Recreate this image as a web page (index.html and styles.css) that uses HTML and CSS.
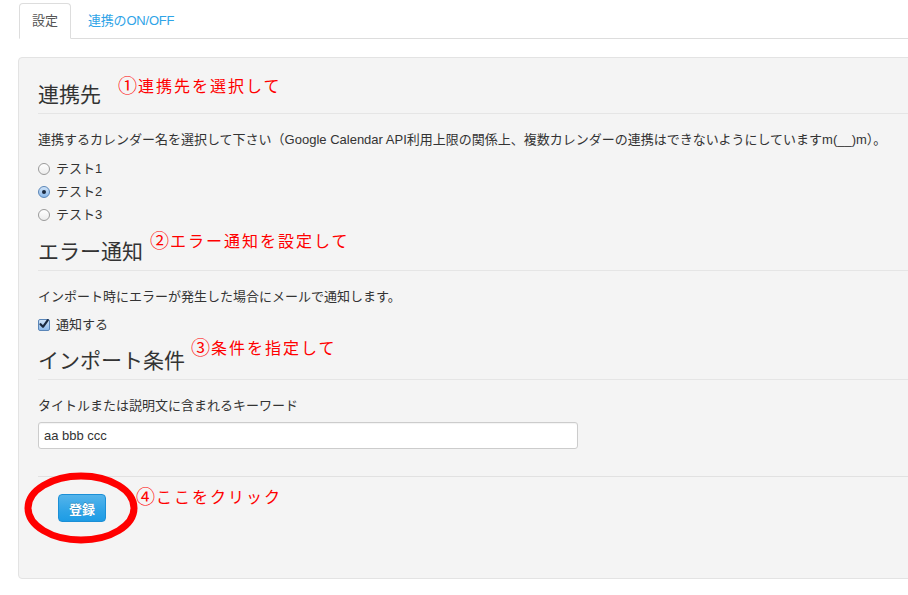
FILE: index.html
```html
<!DOCTYPE html>
<html lang="ja">
<head>
<meta charset="utf-8">
<link rel="stylesheet" href="styles.css">
</head>
<body>
<div class="page">
  <ul class="tabs">
    <li class="tab active">設定</li>
    <li class="tab link">連携のON/OFF</li>
  </ul>
  <div class="well">
    <div class="legend">連携先</div>
    <p class="help">連携するカレンダー名を選択して下さい（Google Calendar API利用上限の関係上、複数カレンダーの連携はできないようにしていますm(__)m）。</p>
    <div class="radios">
      <label class="opt"><span class="radio"></span>テスト1</label>
      <label class="opt"><span class="radio checked"></span>テスト2</label>
      <label class="opt"><span class="radio"></span>テスト3</label>
    </div>
    <div class="legend l2">エラー通知</div>
    <p class="help">インポート時にエラーが発生した場合にメールで通知します。</p>
    <label class="opt check-row"><span class="checkbox"><svg viewBox="0 0 12 12" width="12" height="12"><path d="M2.5 6.2 L5 8.8 L9.8 2.2" fill="none" stroke="#1a2a40" stroke-width="2.2" stroke-linecap="round" stroke-linejoin="round"/></svg></span>通知する</label>
    <div class="legend l3">インポート条件</div>
    <p class="help label">タイトルまたは説明文に含まれるキーワード</p>
    <div class="input">aa bbb ccc</div>
    <div class="actions">
      <button class="btn">登録</button>
    </div>
  </div>

  <div class="note n1"><span class="num">①</span>連携先を選択して</div>
  <div class="note n2"><span class="num">②</span>エラー通知を設定して</div>
  <div class="note n3"><span class="num">③</span>条件を指定して</div>
  <div class="note n4"><span class="num">④</span>ここをクリック</div>
  <svg class="ring" width="120" height="76" viewBox="0 0 120 76"><ellipse cx="59" cy="38" rx="53" ry="32" fill="none" stroke="#f00" stroke-width="7"/></svg>
</div>
</body>
</html>
```
FILE: styles.css
```css
html, body {
  margin: 0;
  padding: 0;
  background: #fff;
  overflow: hidden;
}
body {
  font-family: "Liberation Sans", "Noto Sans CJK JP", sans-serif;
  font-size: 13px;
  color: #333;
}
.page {
  position: relative;
  width: 908px;
  height: 595px;
  overflow: hidden;
}
.tabs {
  list-style: none;
  margin: 3px 0 0 19px;
  padding: 0;
  display: flex;
  border-bottom: 1px solid #ddd;
  height: 35px;
}
.tab {
  height: 35px;
  line-height: 33px;
  box-sizing: border-box;
  padding: 0 12px;
  margin-right: 2px;
  border: 1px solid transparent;
  border-radius: 4px 4px 0 0;
}
.tab.active {
  border-color: #ddd;
  border-bottom-color: #fff;
  background: #fff;
  height: 36px;
  color: #555;
}
.tab.link {
  color: #2fa4e7;
  padding-left: 14px;
  letter-spacing: -0.2px;
}
.well {
  margin: 18px -20px 0 18px;
  background: #f4f4f4;
  border: 1px solid #e3e3e3;
  border-radius: 4px;
  padding: 18px 0 55px 19px;
  box-sizing: border-box;
  height: 522px;
}
.legend {
  font-size: 21px;
  line-height: 37px;
  height: 37px;
  border-bottom: 1px solid #e5e5e5;
  color: #333;
}
.help {
  margin: 16px 0 0;
  line-height: 20px;
}
.radios {
  margin-top: 7px;
}
.opt {
  display: flex;
  align-items: center;
  height: 23px;
  line-height: 23px;
}
.radio {
  width: 12px;
  height: 12px;
  box-sizing: border-box;
  border: 1px solid #9a9a9a;
  border-radius: 50%;
  background: linear-gradient(#fff, #ececec);
  margin: 0 6px 0 0;
  position: relative;
}
.radio.checked {
  border-color: #5a86b8;
  background: linear-gradient(#cfe3f8, #8cb9ea);
}
.radio.checked::after {
  content: "";
  position: absolute;
  left: 3px;
  top: 3px;
  width: 4px;
  height: 4px;
  border-radius: 50%;
  background: #1a2a40;
}
.l2 { margin-top: 7px; }
.check-row { margin-top: 6px; }
.checkbox {
  width: 12px;
  height: 12px;
  box-sizing: border-box;
  border: 1px solid #5a86b8;
  border-radius: 2px;
  background: linear-gradient(#cfe3f8, #8cb9ea);
  margin-right: 6px;
  display: flex;
  align-items: center;
  justify-content: center;
  overflow: visible;
}
.checkbox svg {
  flex: none;
  margin-top: -2px;
}
.l3 { margin-top: 6px; }
.label { margin-top: 16px; }
.input {
  margin-top: 6px;
  width: 540px;
  height: 27px;
  box-sizing: border-box;
  border: 1px solid #ccc;
  border-radius: 3px;
  background: #fff;
  padding: 0 5px;
  line-height: 25px;
  font-size: 13px;
  color: #333;
  box-shadow: inset 0 1px 1px rgba(0,0,0,0.05);
}
.actions {
  margin-top: 27px;
  border-top: 1px solid #e1e1e1;
  padding: 17px 0 0 20px;
}
.btn {
  width: 48px;
  height: 28px;
  border: 1px solid #1b8fd6;
  border-radius: 4px;
  background: linear-gradient(#54b4eb, #2fa4e7 60%, #1d9ce5);
  color: #fff;
  font-family: "Liberation Sans", "Noto Sans CJK JP", sans-serif;
  font-size: 13px;
  font-weight: bold;
  padding: 0;
  text-shadow: 0 -1px 0 rgba(0,0,0,0.2);
}
.note {
  position: absolute;
  color: #f00;
  font-family: "Noto Sans CJK JP", sans-serif;
  font-size: 16px;
  letter-spacing: 2px;
  line-height: 20px;
  display: flex;
  align-items: center;
}
.num {
  font-size: 19px;
  letter-spacing: 0;
  margin-right: 1px;
}
.n1 { left: 118px; top: 75px; }
.n2 { left: 150px; top: 230px; }
.n3 { left: 191px; top: 337px; }
.n4 { left: 136px; top: 486px; }
.ring {
  position: absolute;
  left: 22px;
  top: 470px;
}
```
